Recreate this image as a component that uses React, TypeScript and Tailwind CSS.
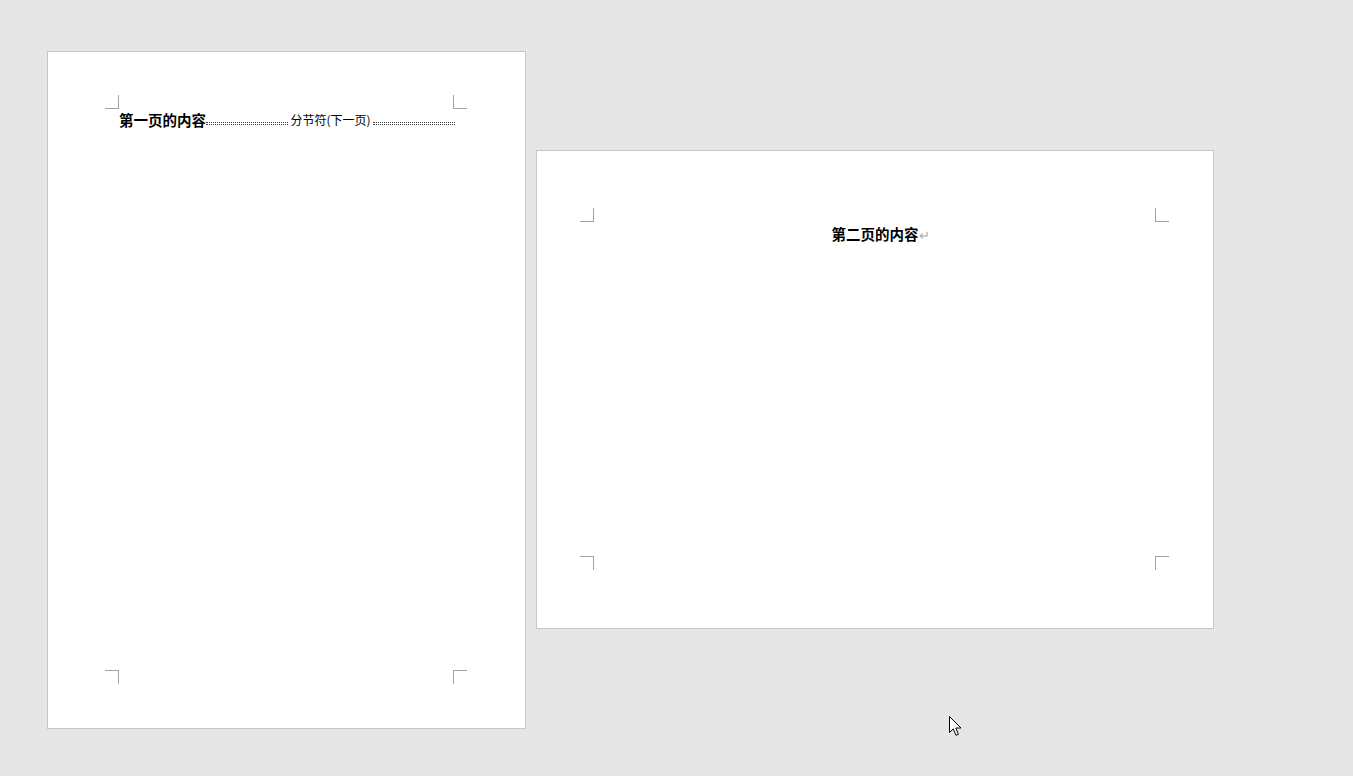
const MARK = "absolute w-[14px] h-[14px] border-[#a3a3a3]";

function Corners({ w, h, mx, my }: { w: number; h: number; mx: number; my: number }) {
  // mx/my: distance from inner page edge to the margin line
  const l = mx - 14;
  const t = my - 14;
  const r = w - mx - 1;
  const b = h - my - 1;
  return (
    <>
      <div className={`${MARK} border-r border-b`} style={{ left: l, top: t }} />
      <div className={`${MARK} border-l border-b`} style={{ left: r, top: t }} />
      <div className={`${MARK} border-r border-t`} style={{ left: l, top: b }} />
      <div className={`${MARK} border-l border-t`} style={{ left: r, top: b }} />
    </>
  );
}

function Cursor() {
  return (
    <svg className="absolute left-[949px] top-[716px]" width="14" height="22" viewBox="0 0 14 22">
      <path d="M0.5 0.5 L0.5 16.5 L4.3 12.9 L7 19.3 L9.4 18.3 L6.8 12 L12 12 Z" fill="#fff" stroke="#000" strokeWidth="1" strokeLinejoin="round" />
    </svg>
  );
}

export default function App() {
  return (
    <div className="relative min-h-screen bg-[#e6e6e6] font-['Noto_Sans_CJK_SC',sans-serif] text-black">
      <div className="flex items-start gap-[10px] pl-[47px] pt-[51px]">
        {/* portrait page */}
        <div className="relative w-[479px] h-[678px] shrink-0 border border-[#c6c6c6] bg-white pl-[71px] pr-[70px] pt-[58px]">
          <Corners w={477} h={676} mx={71} my={57} />
          <div className="flex items-center h-[20px] leading-[20px]">
            <span className="text-[14.5px] font-semibold">第一页的内容</span>
            <div className="flex-1 h-[3px] mt-[7px] border-y border-dotted border-[#444]" />
            <span className="text-[12px] px-[2px]">分节符(下一页)</span>
            <div className="flex-1 h-[3px] mt-[7px] border-y border-dotted border-[#444]" />
          </div>
        </div>

        {/* landscape page */}
        <div className="relative mt-[99px] w-[678px] h-[479px] shrink-0 border border-[#c6c6c6] bg-white px-[57px] pt-[73px]">
          <Corners w={676} h={477} mx={57} my={71} />
          <div className="flex justify-center h-[20px] leading-[20px]">
            <span className="relative text-[14.5px] font-semibold">
              第二页的内容
              <span className="absolute left-full top-[1px] text-[13px] font-normal text-[#a8a8a8]">↵</span>
            </span>
          </div>
        </div>
      </div>
      <Cursor />
    </div>
  );
}
